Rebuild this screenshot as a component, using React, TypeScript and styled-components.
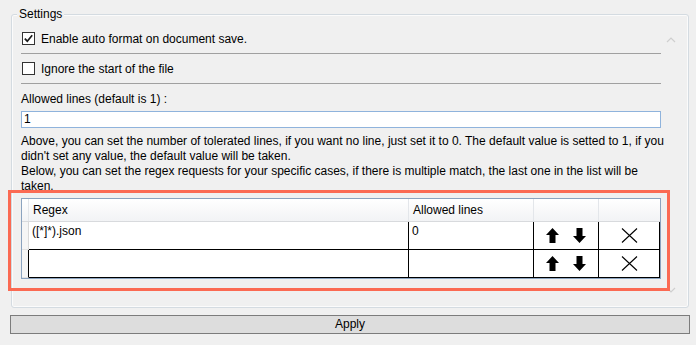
import styled, { createGlobalStyle } from "styled-components"

const GlobalStyle = createGlobalStyle`
    html, body {
        margin: 0;
        padding: 0;
        background: #f0f0f0;
    }
    body {
        font-family: "Liberation Sans", Arial, sans-serif;
        font-size: 12px;
        color: #000;
    }
`

const rows = [
    { regex: "([*]*).json", lines: "0" },
    { regex: "", lines: "" },
]

function CheckMark() {
    return (
        <svg width="11" height="11" viewBox="0 0 11 11">
            <path d="M1.8 5.6 L4.3 8.2 L9.2 2.2" fill="none" stroke="#1a1a1a" strokeWidth="1.7" />
        </svg>
    )
}

function ArrowUp() {
    return (
        <svg width="13" height="15" viewBox="0 0 13 15">
            <path d="M6.5 0 L13 7 L9.5 7 L9.5 15 L3.5 15 L3.5 7 L0 7 Z" fill="#000" />
        </svg>
    )
}

function ArrowDown() {
    return (
        <svg width="13" height="15" viewBox="0 0 13 15">
            <path d="M6.5 15 L13 8 L9.5 8 L9.5 0 L3.5 0 L3.5 8 L0 8 Z" fill="#000" />
        </svg>
    )
}

function Cross() {
    return (
        <svg width="17" height="15" viewBox="0 0 17 15">
            <path d="M1 0.5 L16 14.5 M16 0.5 L1 14.5" fill="none" stroke="#000" strokeWidth="1.1" />
        </svg>
    )
}

function Chevron({ down }: { down?: boolean }) {
    return (
        <svg width="10" height="6" viewBox="0 0 10 6">
            <path
                d={down ? "M1 1 L5 5 L9 1" : "M1 5 L5 1 L9 5"}
                fill="none"
                stroke="#cfcfcf"
                strokeWidth="1.2"
            />
        </svg>
    )
}

function App() {
    return (
        <>
            <GlobalStyle />
            <Page>
                <GroupBox>
                    <Legend>Settings</Legend>
                    <Content>
                        <CheckRow>
                            <Box><CheckMark /></Box>
                            <span>Enable auto format on document save.</span>
                        </CheckRow>
                        <Separator />
                        <CheckRow>
                            <Box />
                            <span>Ignore the start of the file</span>
                        </CheckRow>
                        <Separator />
                        <FieldLabel>Allowed lines (default is 1) :</FieldLabel>
                        <TextInput>1</TextInput>
                        <Help>
                            Above, you can set the number of tolerated lines, if you want no line, just set it to 0. The default value is setted to 1, if you
                            <br />
                            didn't set any value, the default value will be taken.
                            <br />
                            Below, you can set the regex requests for your specific cases, if there is multiple match, the last one in the list will be
                            <br />
                            taken.
                        </Help>
                        <Highlight>
                            <Grid>
                                <HeadRow>
                                    <HeadCell />
                                    <HeadCell>Regex</HeadCell>
                                    <HeadCell>Allowed lines</HeadCell>
                                    <HeadCell />
                                    <HeadCell $last />
                                </HeadRow>
                                {rows.map((row, i) => (
                                    <DataRow key={i}>
                                        <Gutter $dark={i > 0} />
                                        <Cell>{row.regex}</Cell>
                                        <Cell>{row.lines}</Cell>
                                        <IconCell $gap={14}>
                                            <ArrowUp />
                                            <ArrowDown />
                                        </IconCell>
                                        <IconCell>
                                            <Cross />
                                        </IconCell>
                                    </DataRow>
                                ))}
                            </Grid>
                        </Highlight>
                    </Content>
                    <ScrollGutter>
                        <Chevron />
                        <Chevron down />
                    </ScrollGutter>
                </GroupBox>
                <Button>Apply</Button>
            </Page>
        </>
    )
}

const Page = styled.div`
    width: 680px;
    padding: 14px 0 0 10px;
`

const GroupBox = styled.div`
    position: relative;
    display: flex;
    margin: 0 1px;
    border: 1px solid #d4dbe1;
    border-radius: 3px;
    box-shadow: inset 0 0 0 1px #fbfbfb;
`

const Legend = styled.div`
    position: absolute;
    top: -8px;
    left: 5px;
    padding: 0 2px;
    line-height: 15px;
    background: #f0f0f0;
`

const Content = styled.div`
    width: 640px;
    padding: 9px 0 28px 9px;
    display: flex;
    flex-direction: column;
`

const ScrollGutter = styled.div`
    flex: 1;
    display: flex;
    flex-direction: column;
    justify-content: space-between;
    padding: 22px 0 14px 5px;
`

const CheckRow = styled.div`
    height: 29px;
    display: flex;
    align-items: center;
    gap: 6px;
    padding-left: 1px;
`

const Box = styled.div`
    box-sizing: border-box;
    width: 13px;
    height: 13px;
    border: 1px solid #333;
    background: #fff;
    display: flex;
    align-items: center;
    justify-content: center;
`

const Separator = styled.div`
    height: 1px;
    background: #a0a0a0;
`

const FieldLabel = styled.div`
    margin-top: 8px;
    line-height: 15px;
`

const TextInput = styled.div`
    box-sizing: border-box;
    margin-top: 4px;
    height: 17px;
    padding: 0 2px;
    line-height: 15px;
    background: #fff;
    border: 1px solid #8fb3dc;
`

const Help = styled.div`
    margin-top: 6px;
    line-height: 15px;
    white-space: nowrap;
`

const Highlight = styled.div`
    position: relative;
    margin-top: 4px;

    &::after{
        content: "";
        position: absolute;
        top: -8px;
        left: -13px;
        right: -9px;
        bottom: -12px;
        border: 3px solid #fb6a53;
        pointer-events: none;
    }
`

const Grid = styled.div`
    border: 1px solid #8ba3bf;
    background: #fff;
`

const columns = "7px 380px 125px 65px 1fr"

const HeadRow = styled.div`
    display: grid;
    grid-template-columns: ${columns};
    height: 23px;
    background: linear-gradient(#ffffff, #f2f3f5);
    border-bottom: 1px solid #d8dadd;
    box-sizing: border-box;
`

const HeadCell = styled.div<{ $last?: boolean }>`
    box-sizing: border-box;
    padding-left: 4px;
    line-height: 22px;
    border-right: ${p => p.$last ? "none" : "1px solid #e3e6ea"};
    overflow: hidden;
`

const DataRow = styled.div`
    display: grid;
    grid-template-columns: ${columns};
    height: 28px;
`

const Gutter = styled.div<{ $dark?: boolean }>`
    box-sizing: border-box;
    background: #f5f5f5;
    border-bottom: 1px solid #e2e2e2;
    border-right: 1px solid ${p => p.$dark ? "#000" : "#d9d9d9"};
`

const Cell = styled.div`
    box-sizing: border-box;
    padding: 2px 0 0 3px;
    line-height: 15px;
    border-right: 1px solid #000;
    border-bottom: 1px solid #000;
`

const IconCell = styled.div<{ $gap?: number }>`
    box-sizing: border-box;
    display: flex;
    align-items: center;
    justify-content: center;
    gap: ${p => p.$gap ?? 0}px;
    border-right: 1px solid #000;
    border-bottom: 1px solid #000;
`

const Button = styled.div`
    box-sizing: border-box;
    margin-top: 7px;
    height: 19px;
    line-height: 17px;
    text-align: center;
    background: #dddddd;
    border: 1px solid #7c7c7c;
`

export default App
